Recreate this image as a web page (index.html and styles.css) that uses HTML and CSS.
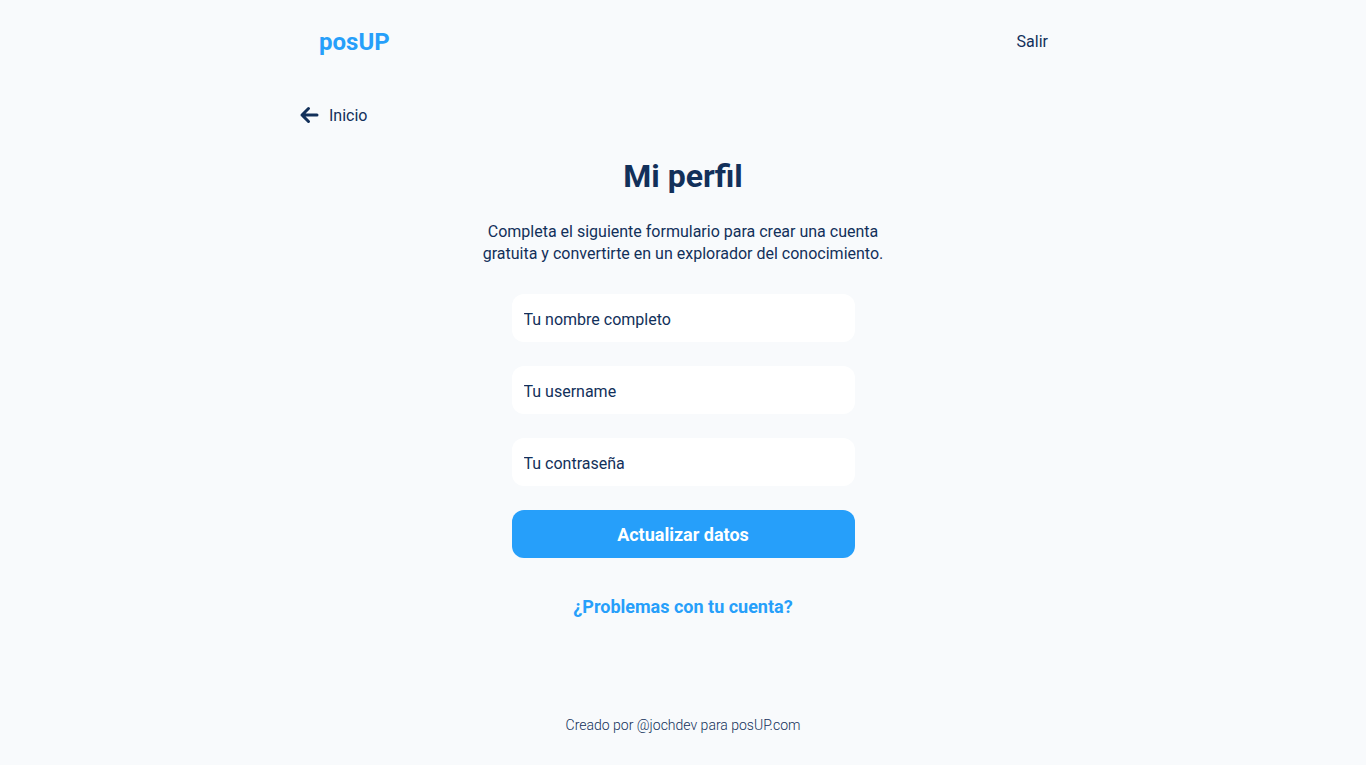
FILE: index.html
```html
<!DOCTYPE html>
<html lang="es">
<head>
<meta charset="utf-8">
<title>Mi perfil - posUP</title>
<link rel="stylesheet" href="styles.css">
</head>
<body>
<div class="page">
  <header class="header">
    <a class="logo" href="#">posUP</a>
    <a class="logout" href="#">Salir</a>
  </header>
  <main class="main">
    <a class="back" href="#">
      <svg class="back-icon" width="20" height="18" viewBox="0 0 20 18" aria-hidden="true">
        <path d="M18 9H3M9.5 2.5L3 9l6.5 6.5" fill="none" stroke="#12305a" stroke-width="3" stroke-linecap="round" stroke-linejoin="round"/>
      </svg>
      <span>Inicio</span>
    </a>
    <section class="profile">
      <h1 class="title">Mi perfil</h1>
      <p class="lead">Completa el siguiente formulario para crear una cuenta gratuita y convertirte en un explorador del conocimiento.</p>
      <form class="form">
        <input class="field" type="text" placeholder="Tu nombre completo">
        <input class="field" type="text" placeholder="Tu username">
        <input class="field" type="password" placeholder="Tu contraseña">
        <button class="submit" type="button">Actualizar datos</button>
      </form>
      <a class="help" href="#">¿Problemas con tu cuenta?</a>
    </section>
  </main>
  <footer class="footer">Creado por @jochdev para posUP.com</footer>
</div>
</body>
</html>
```
FILE: styles.css
```css
* { box-sizing: border-box; }
html, body { margin: 0; padding: 0; }
body {
  background: #f8fafc;
  font-family: Roboto, "Noto Sans", sans-serif;
  color: #12305a;
}
a { text-decoration: none; }
.page {
  width: 768px;
  margin: 0 auto;
  min-height: 765px;
  display: flex;
  flex-direction: column;
}
.header {
  height: 82px;
  padding: 0 19px 0 20px;
  display: flex;
  align-items: center;
  justify-content: space-between;
}
.logo {
  color: #269ffa;
  font-size: 24px;
  font-weight: 700;
  line-height: 1;
  margin-top: 1px;
}
.logout {
  color: #12305a;
  font-size: 16px;
  font-weight: 400;
}
.main {
  display: flex;
  flex-direction: column;
}
.back {
  display: flex;
  align-items: center;
  gap: 10px;
  color: #12305a;
  font-size: 16px;
  font-weight: 400;
  height: 24px;
  margin-top: 21px;
}
.back-icon { display: block; }
.profile {
  display: flex;
  flex-direction: column;
  align-items: center;
}
.title {
  margin: 29px 0 0;
  font-size: 32px;
  font-weight: 700;
  line-height: 40px;
  color: #12305a;
}
.lead {
  margin: 25px 0 0;
  width: 410px;
  text-align: center;
  font-size: 16px;
  line-height: 22px;
  color: #12305a;
}
.form {
  margin-top: 29px;
  width: 343px;
  display: flex;
  flex-direction: column;
  gap: 24px;
}
.field {
  height: 48px;
  border: none;
  border-radius: 12px;
  background: #ffffff;
  padding: 2px 12px 0;
  font-family: inherit;
  font-size: 16px;
  font-weight: 400;
  color: #12305a;
  outline: none;
}
.field::placeholder { color: #12305a; opacity: 1; }
.submit {
  height: 48px;
  border: none;
  border-radius: 12px;
  background: #269ffa;
  color: #ffffff;
  font-family: inherit;
  font-size: 18px;
  font-weight: 700;
}
.help {
  margin-top: 38px;
  color: #269ffa;
  font-size: 18px;
  font-weight: 700;
  line-height: 22px;
}
.footer {
  margin-top: auto;
  padding-bottom: 32px;
  text-align: center;
  font-size: 14px;
  font-weight: 300;
  color: #12305a;
}
```
